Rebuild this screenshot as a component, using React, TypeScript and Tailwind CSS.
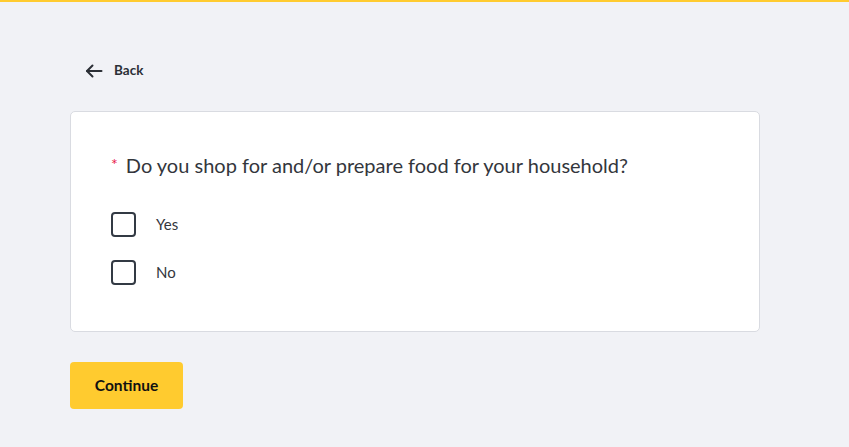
import React from "react";

export default function App() {
  return (
    <div className="min-h-[447px] w-full bg-[#f1f2f6] border-t-2 border-[#ffcb2f]" style={{ fontFamily: "Lato, 'Open Sans', sans-serif" }}>
      <div className="w-[690px] ml-[70px] pt-[58px]">
        <button className="flex items-center gap-[11px] pl-[15px] h-[21px] text-[13.5px] font-bold text-[#2b2f36]">
          <svg width="18" height="14" viewBox="0 0 18 14" fill="none" stroke="#2b2f36" strokeWidth="2" strokeLinecap="round" strokeLinejoin="round">
            <path d="M16.5 7H2" />
            <path d="M7.5 1.5L2 7l5.5 5.5" />
          </svg>
          <span>Back</span>
        </button>
        <div className="mt-[30px] h-[221px] bg-white border border-[#d9dbe1] rounded-[5px] pl-[40px] pt-[40px]">
          <div className="flex items-start text-[20px] text-[#33363c] leading-[26px]">
            <span className="text-[#e8194b] text-[16px] mr-[8px] leading-[24px]">*</span>
            <span>Do you shop for and/or prepare food for your household?</span>
          </div>
          <div className="mt-[34px] flex flex-col gap-[23px]">
            {["Yes", "No"].map((l) => (
              <label key={l} className="flex items-center gap-[20px] text-[15px] text-[#33363c]">
                <span className="w-[25px] h-[25px] border-2 border-[#333a44] rounded-[4px] bg-white" />
                <span>{l}</span>
              </label>
            ))}
          </div>
        </div>
        <button className="mt-[30px] w-[113px] h-[47px] bg-[#ffcb2f] rounded-[4px] text-[15.5px] font-bold text-[#111]">
          Continue
        </button>
      </div>
    </div>
  );
}
